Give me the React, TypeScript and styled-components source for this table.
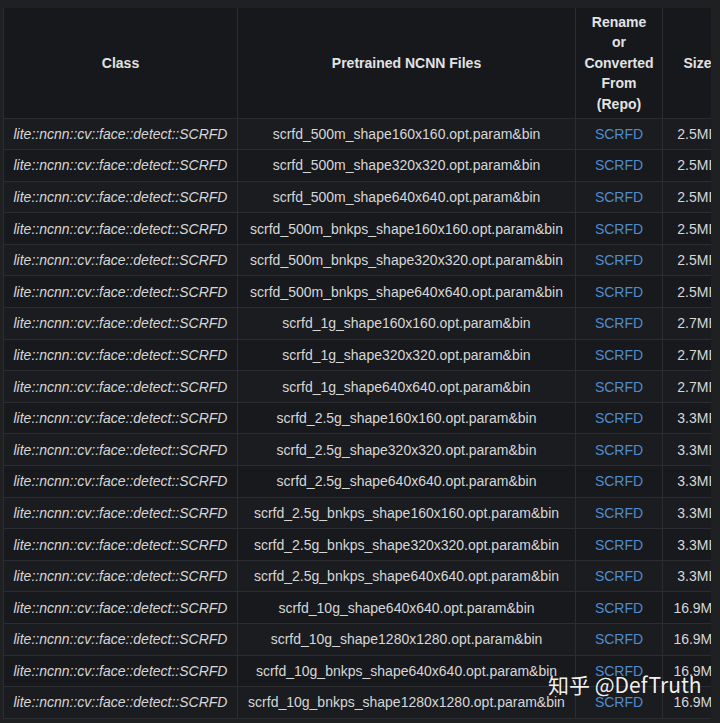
import React from "react";
import styled, { createGlobalStyle } from "styled-components";

const GlobalStyle = createGlobalStyle`
  html, body {
    margin: 0;
    padding: 0;
    background: #1f2022;
  }
  body {
    font-family: "Liberation Sans", Arial, sans-serif;
    width: 720px;
    height: 723px;
    overflow: hidden;
  }
`;

type Row = { file: string; size: string };

const rows: Row[] = [
  { file: "scrfd_500m_shape160x160.opt.param&bin", size: "2.5MB" },
  { file: "scrfd_500m_shape320x320.opt.param&bin", size: "2.5MB" },
  { file: "scrfd_500m_shape640x640.opt.param&bin", size: "2.5MB" },
  { file: "scrfd_500m_bnkps_shape160x160.opt.param&bin", size: "2.5MB" },
  { file: "scrfd_500m_bnkps_shape320x320.opt.param&bin", size: "2.5MB" },
  { file: "scrfd_500m_bnkps_shape640x640.opt.param&bin", size: "2.5MB" },
  { file: "scrfd_1g_shape160x160.opt.param&bin", size: "2.7MB" },
  { file: "scrfd_1g_shape320x320.opt.param&bin", size: "2.7MB" },
  { file: "scrfd_1g_shape640x640.opt.param&bin", size: "2.7MB" },
  { file: "scrfd_2.5g_shape160x160.opt.param&bin", size: "3.3MB" },
  { file: "scrfd_2.5g_shape320x320.opt.param&bin", size: "3.3MB" },
  { file: "scrfd_2.5g_shape640x640.opt.param&bin", size: "3.3MB" },
  { file: "scrfd_2.5g_bnkps_shape160x160.opt.param&bin", size: "3.3MB" },
  { file: "scrfd_2.5g_bnkps_shape320x320.opt.param&bin", size: "3.3MB" },
  { file: "scrfd_2.5g_bnkps_shape640x640.opt.param&bin", size: "3.3MB" },
  { file: "scrfd_10g_shape640x640.opt.param&bin", size: "16.9MB" },
  { file: "scrfd_10g_shape1280x1280.opt.param&bin", size: "16.9MB" },
  { file: "scrfd_10g_bnkps_shape640x640.opt.param&bin", size: "16.9MB" },
  { file: "scrfd_10g_bnkps_shape1280x1280.opt.param&bin", size: "16.9MB" },
];

const columns = [234, 338, 87, 70];

export default function App() {
  return (
    <>
      <GlobalStyle />
      <Page>
        <Viewport>
          <Table>
            <colgroup>
              {columns.map((w, i) => (
                <Col key={i} $width={w} />
              ))}
            </colgroup>
            <thead>
              <tr>
                <Th>Class</Th>
                <Th>Pretrained NCNN Files</Th>
                <Th>
                  Rename
                  <br />
                  or
                  <br />
                  Converted
                  <br />
                  From
                  <br />
                  (Repo)
                </Th>
                <Th>Size</Th>
              </tr>
            </thead>
            <tbody>
              {rows.map((r) => (
                <Tr key={r.file}>
                  <ClassCell>lite::ncnn::cv::face::detect::SCRFD</ClassCell>
                  <Td>{r.file}</Td>
                  <Td>
                    <RepoLink href="#">SCRFD</RepoLink>
                  </Td>
                  <Td>{r.size}</Td>
                </Tr>
              ))}
            </tbody>
          </Table>
        </Viewport>
        <Watermark>知乎 @DefTruth</Watermark>
      </Page>
    </>
  );
}

const Page = styled.div`
  position: relative;
  width: 720px;
  height: 723px;
  padding: 8px 0 0 3px;
  box-sizing: border-box;
  overflow: hidden;
`;

const Viewport = styled.div`
  width: 708px;
  overflow: hidden;
  background: #17181b;
`;

const Table = styled.table`
  border-collapse: collapse;
  table-layout: fixed;
  width: ${columns.reduce((a, b) => a + b, 0)}px;
  font-size: 14px;
  color: #d6d7d9;
`;

const Col = styled.col<{ $width: number }>`
  width: ${(p) => p.$width}px;
`;

const Th = styled.th`
  padding: 3.5px 4px;
  font-weight: 700;
  line-height: 20.5px;
  text-align: center;
  color: #e2e3e5;
  border: 1px solid #2b2d31;
  border-top: none;
`;

const Tr = styled.tr`
  background: #18191c;
  &:nth-child(odd) {
    background: #1b1c1f;
  }
`;

const Td = styled.td`
  padding: 5.3px 4px;
  line-height: 20px;
  text-align: center;
  white-space: nowrap;
  overflow: hidden;
  border: 1px solid #2b2d31;
`;

const ClassCell = styled(Td)`
  font-style: italic;
`;

const RepoLink = styled.a`
  color: #4f8cd0;
  text-decoration: none;
`;

const Watermark = styled.div`
  position: absolute;
  left: 548px;
  top: 669px;
  white-space: nowrap;
  font-family: "Noto Sans CJK SC", "Noto Sans", sans-serif;
  font-size: 21px;
  line-height: 30px;
  color: rgba(255, 255, 255, 0.95);
`;
